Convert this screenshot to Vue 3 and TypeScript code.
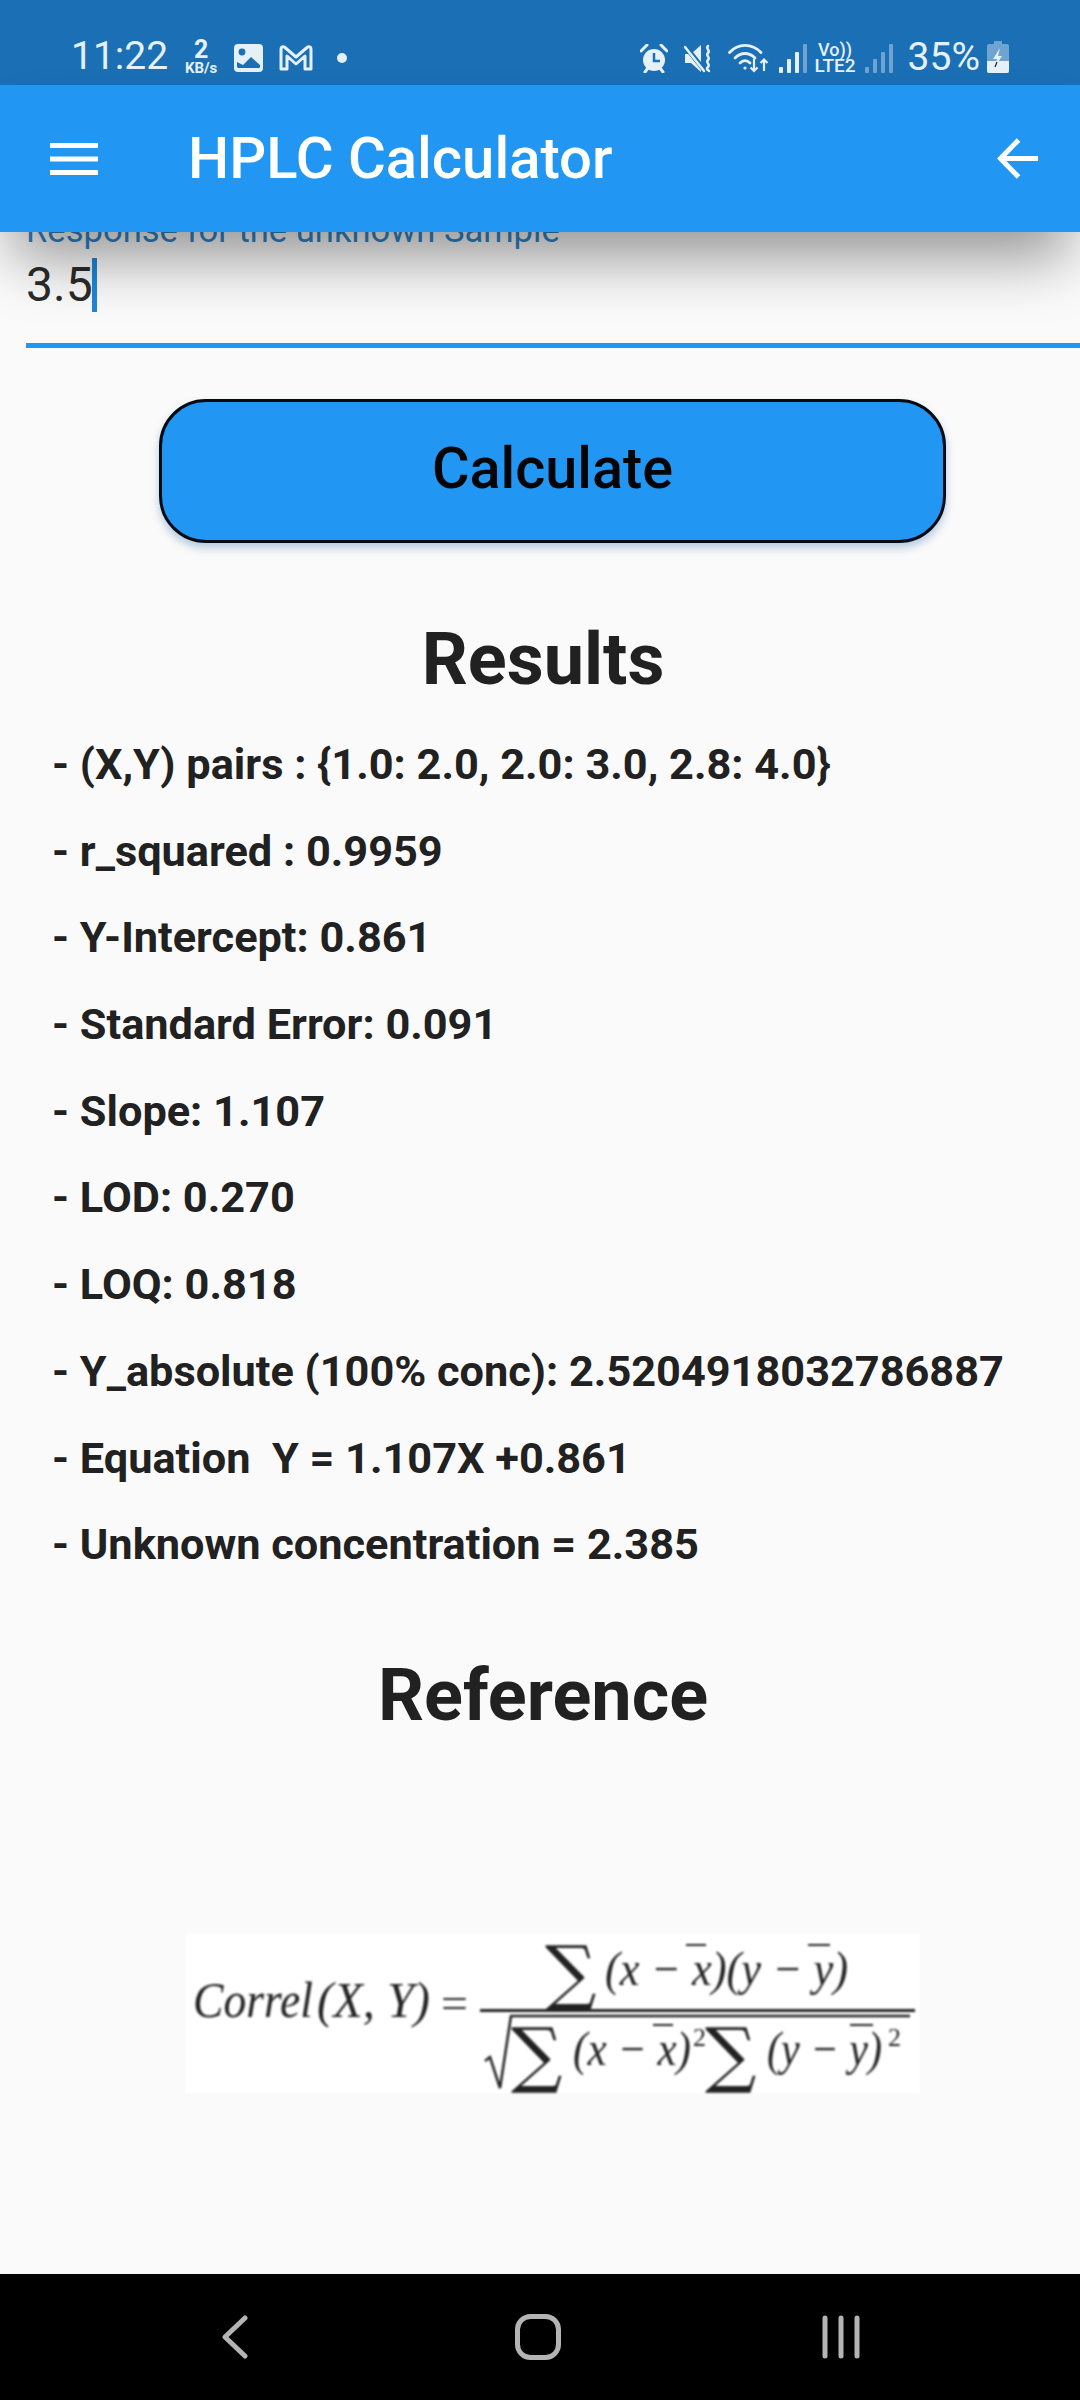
<script setup lang="ts">
const results: string[] = [
  "- (X,Y) pairs : {1.0: 2.0, 2.0: 3.0, 2.8: 4.0}",
  "- r_squared : 0.9959",
  "- Y-Intercept: 0.861",
  "- Standard Error: 0.091",
  "- Slope: 1.107",
  "- LOD: 0.270",
  "- LOQ: 0.818",
  "- Y_absolute (100% conc): 2.5204918032786887",
  "- Equation  Y = 1.107X +0.861",
  "- Unknown concentration = 2.385",
];
</script>

<template>
  <div class="phone">
    <div class="status">
      <span class="clock">11:22</span>
      <div class="speed">
        <span class="speed-num">2</span>
        <span class="speed-unit">KB/s</span>
      </div>
      <svg class="ic-gallery" width="29" height="28" viewBox="0 0 29 28">
        <rect width="29" height="28" rx="4" fill="#e6f0f9" />
        <circle cx="8" cy="8" r="3.4" fill="#1a6fb5" />
        <path d="M3 23v-5l6 3 8-8 9 8v2a1 1 0 0 1-1 1H4z" fill="#1a6fb5" />
      </svg>
      <svg class="ic-mail" width="34" height="26" viewBox="0 0 34 26" fill="none">
        <path
          d="M2 24V4c0-2 2-3 4-1.500L17 12 28 2.500C30 1 32 2 32 4v20h-6V11l-9 8-9-8v13z"
          stroke="#e6f0f9"
          stroke-width="3"
          stroke-linejoin="round"
        />
      </svg>
      <span class="dot"></span>
      <span class="grow"></span>
      <svg class="ic-alarm" width="28" height="29" viewBox="0 0 28 29">
        <circle cx="14" cy="16" r="11" fill="#e6f0f9" />
        <path d="M1 7l6-6M27 7l-6-6M5 28l3-4M23 28l-3-4" stroke="#e6f0f9" stroke-width="3" stroke-linecap="round" />
        <path d="M14 9v8h6" fill="none" stroke="#1a6fb5" stroke-width="2.500" />
      </svg>
      <svg class="ic-mute" width="30" height="29" viewBox="0 0 30 29" fill="none">
        <path d="M1 10h6l10-9v27L7 19H1z" fill="#e6f0f9" />
        <path d="M1 2l20 25" stroke="#1a6fb5" stroke-width="5" />
        <path d="M1 3l19 24" stroke="#e6f0f9" stroke-width="2.500" stroke-linecap="round" />
        <path
          d="M24 2c-3 3 3 4 0 7s3 4 0 7 3 4 0 7 1 3 1 4"
          stroke="#e6f0f9"
          stroke-width="2.500"
          stroke-linecap="round"
        />
      </svg>
      <svg class="ic-wifi" width="41" height="30" viewBox="0 0 41 30" fill="none" stroke="#e6f0f9" stroke-width="2.800">
        <path d="M1.500 9.500C10 0 24 0 33 9.500" stroke-linecap="round" />
        <path d="M7 15c6-6 14-6 20 0" stroke-linecap="round" />
        <path d="M12 20c3-3 7-3 10 0" stroke-linecap="round" />
        <circle cx="17" cy="25" r="1.600" fill="#e6f0f9" stroke="none" />
        <path d="M26 16v12M22.500 24.500l3.500 3.500 3.500-3.500" stroke-width="2.200" />
        <path d="M36 28V17M32.500 20l3.500-3.500 3.500 3.500" stroke-width="2.200" />
      </svg>
      <svg class="ic-signal" width="28" height="29" viewBox="0 0 28 29">
        <rect x="0" y="23" width="4" height="6" rx="1" fill="#e6f0f9" />
        <rect x="8" y="15" width="4" height="14" rx="1" fill="#e6f0f9" />
        <rect x="16" y="8" width="4" height="21" rx="1" fill="#e6f0f9" />
        <rect x="24" y="0" width="4" height="29" rx="1" fill="#6fa3d2" />
      </svg>
      <div class="volte">
        <span class="vo">Vo))</span>
        <span class="lte">LTE2</span>
      </div>
      <svg class="ic-signal2" width="28" height="29" viewBox="0 0 28 29" fill="#6fa3d2">
        <rect x="0" y="23" width="4" height="6" rx="1" />
        <rect x="8" y="15" width="4" height="14" rx="1" />
        <rect x="16" y="8" width="4" height="21" rx="1" />
        <rect x="24" y="0" width="4" height="29" rx="1" />
      </svg>
      <span class="percent">35%</span>
      <svg class="ic-battery" width="22" height="32" viewBox="0 0 22 32">
        <path d="M7 0h8v3h5a2 2 0 0 1 2 2v25a2 2 0 0 1-2 2H2a2 2 0 0 1-2-2V5a2 2 0 0 1 2-2h5z" fill="#6fa3d2" />
        <path d="M0 20h22v10a2 2 0 0 1-2 2H2a2 2 0 0 1-2-2z" fill="#e6f0f9" />
        <path d="M13 7l-7 11h4l-2 8 7-11h-4z" fill="#e6f0f9" />
        <path d="M10 21l-2 5" stroke="#222" stroke-width="1.200" />
      </svg>
    </div>

    <header class="appbar">
      <svg class="menu" width="48" height="32" viewBox="0 0 48 32" fill="#fff">
        <rect width="48" height="5" />
        <rect y="13.500" width="48" height="5" />
        <rect y="27" width="48" height="5" />
      </svg>
      <h1 class="title">HPLC Calculator</h1>
      <span class="grow"></span>
      <svg class="back" width="41" height="41" viewBox="0 0 41 41" fill="none" stroke="#fff" stroke-width="5">
        <path d="M41 20.500H4" />
        <path d="M21.500 2L3.500 20.500 21.500 39" />
      </svg>
    </header>

    <main class="content">
      <div class="field">
        <div class="field-label">Response for the unknown Sample</div>
        <div class="field-value">3.5<span class="caret"></span></div>
      </div>

      <button class="calc">Calculate</button>

      <h2 class="heading results-heading">Results</h2>
      <ul class="results">
        <li v-for="line in results" :key="line">{{ line }}</li>
      </ul>

      <h2 class="heading ref-heading">Reference</h2>

      <!-- correlation formula -->
      <svg class="formula" width="735" height="160" viewBox="0 0 735 160">
        <rect width="735" height="160" fill="#fff" />
        <g class="f-text" fill="#222">
          <text x="8" y="84" font-size="50" font-style="italic" textLength="120" lengthAdjust="spacingAndGlyphs">Correl</text>
          <text x="132" y="84" font-size="50" font-style="italic" textLength="113" lengthAdjust="spacingAndGlyphs">(X, Y)</text>
          <text x="256" y="84" font-size="42" textLength="27" lengthAdjust="spacingAndGlyphs">=</text>

          <text x="360" y="64" font-size="72" class="sum">∑</text>
          <text x="420" y="52" font-size="48" font-style="italic" textLength="243" lengthAdjust="spacingAndGlyphs">(x − x)(y − y)</text>

          <text x="326" y="146" font-size="72" class="sum">∑</text>
          <text x="388" y="132" font-size="48" font-style="italic" textLength="118" lengthAdjust="spacingAndGlyphs">(x − x)</text>
          <text x="508" y="113" font-size="26">2</text>
          <text x="520" y="146" font-size="72" class="sum">∑</text>
          <text x="582" y="132" font-size="48" font-style="italic" textLength="115" lengthAdjust="spacingAndGlyphs">(y − y)</text>
          <text x="703" y="113" font-size="26">2</text>
        </g>
        <g fill="none" stroke="#222">
          <path d="M295 77.500H730" stroke-width="3" />
          <path d="M300 128l5-4 10 31 11-72H725" stroke-width="2.500" />
          <path d="M501 12h20M623 12h22M468 92h20M665 92h23" stroke-width="2" />
        </g>
      </svg>
    </main>

    <nav class="navbar">
      <svg width="26" height="44" viewBox="0 0 26 44" fill="none" stroke="#b4b4b4" stroke-width="5" stroke-linecap="round" stroke-linejoin="round">
        <path d="M23 3L3 22l20 19" />
      </svg>
      <svg width="46" height="46" viewBox="0 0 46 46" fill="none">
        <rect x="2.500" y="2.500" width="41" height="41" rx="13" stroke="#b4b4b4" stroke-width="5" />
      </svg>
      <svg width="38" height="44" viewBox="0 0 38 44" fill="none" stroke="#b4b4b4" stroke-width="5" stroke-linecap="round">
        <path d="M3 3v38M19 3v38M35 3v38" />
      </svg>
    </nav>
  </div>
</template>

<style>
html,
body {
  margin: 0;
  background: #fafafa;
}
</style>

<style scoped>
.phone {
  width: 1080px;
  height: 2400px;
  display: flex;
  flex-direction: column;
  overflow: hidden;
  background: #fafafa;
  font-family: Roboto, "Liberation Sans", sans-serif;
}
.grow {
  flex: 1;
}

/* status bar */
.status {
  height: 85px;
  flex: none;
  display: flex;
  align-items: flex-end;
  padding: 0 71px 12px 71px;
  box-sizing: border-box;
  background: #1a6fb5;
  color: #e6f0f9;
}
.clock {
  font-size: 39px;
  line-height: 40px;
  margin-bottom: -3px;
}
.speed {
  margin-left: 15px;
  display: flex;
  flex-direction: column;
  align-items: center;
  font-weight: 700;
  width: 36px;
  margin-bottom: -2px;
}
.speed-num {
  font-size: 25px;
  line-height: 22px;
}
.speed-unit {
  font-size: 15px;
  line-height: 14px;
}
.ic-gallery {
  margin-left: 15px;
  margin-bottom: 1px;
}
.ic-mail {
  margin-left: 16px;
  margin-bottom: 2px;
}
.dot {
  width: 10px;
  height: 10px;
  border-radius: 50%;
  background: #e6f0f9;
  margin: 0 0 10px 24px;
}
.ic-alarm {
  margin-right: 1px;
}
.ic-mute {
  margin-left: 15px;
}
.ic-wifi {
  margin-left: 14px;
}
.ic-signal {
  margin-left: 10px;
}
.volte {
  margin-left: 8px;
  width: 41px;
  display: flex;
  flex-direction: column;
  align-items: center;
  font-weight: 500;
  margin-bottom: -1px;
}
.vo {
  font-size: 18px;
  line-height: 16px;
}
.lte {
  font-size: 19px;
  line-height: 16px;
}
.ic-signal2 {
  margin-left: 9px;
}
.percent {
  margin-left: 15px;
  font-size: 39px;
  line-height: 40px;
  margin-bottom: -4px;
}
.ic-battery {
  margin-left: 7px;
}

/* app bar */
.appbar {
  height: 147px;
  flex: none;
  display: flex;
  align-items: center;
  padding: 0 42px 0 50px;
  box-sizing: border-box;
  background: #2196f3;
  color: #fff;
  position: relative;
  z-index: 1;
  box-shadow: 0 38px 60px -12px rgba(0, 0, 0, 0.4);
}
.title {
  margin: -2px 0 0 90px;
  font-size: 58px;
  font-weight: 500;
  line-height: 60px;
}

/* scrolled page */
.content {
  flex: 1;
  min-height: 0;
  overflow: hidden;
  display: flex;
  flex-direction: column;
  padding-left: 26px;
}
.field {
  height: 115px;
  flex: none;
  margin-top: -4px;
  border-bottom: 5px solid #2196f3;
  box-sizing: content-box;
}
.field-label {
  font-size: 34.600px;
  line-height: 20px;
  color: #2f86cb;
  margin-top: -8px;
  white-space: nowrap;
}
.field-value {
  font-size: 48px;
  line-height: 54px;
  color: #2b2b2b;
  margin-top: 18px;
  display: flex;
  align-items: center;
}
.caret {
  width: 5px;
  height: 54px;
  margin-left: -1px;
  background: #2186d8;
}
.calc {
  align-self: flex-start;
  width: 787px;
  height: 144px;
  margin: 51px 0 0 133px;
  border: 3px solid #050a14;
  border-radius: 47px;
  background: #2196f3;
  color: #050505;
  font-family: inherit;
  font-size: 57.600px;
  font-weight: 500;
  padding: 0 0 6px;
  box-shadow: 0 5px 8px rgba(20, 90, 160, 0.3);
}
.heading {
  margin: 0;
  font-size: 72px;
  font-weight: 700;
  color: #212121;
  text-align: center;
  line-height: 84px;
  padding-right: 20px;
}
.results-heading {
  margin-top: 75px;
}
.results {
  list-style: none;
  margin: 38px 0 0;
  padding: 0 0 0 26px;
  display: flex;
  flex-direction: column;
  gap: 36.700px;
}
.results li {
  font-size: 43.300px;
  line-height: 50px;
  font-weight: 700;
  color: #212121;
  white-space: pre;
}
.ref-heading {
  margin-top: 84px;
}
.formula {
  align-self: flex-start;
  margin: 195px 0 0 159px;
  filter: blur(0.8px);
  flex: none;
}
.f-text {
  font-family: "Liberation Serif", serif;
}
.sum {
  font-family: "DejaVu Serif", serif;
}

/* android navigation */
.navbar {
  height: 126px;
  flex: none;
  display: grid;
  grid-template-columns: repeat(3, 303px);
  justify-items: center;
  align-items: center;
  padding: 0 61px 0 83px;
  box-sizing: border-box;
  background: #000;
}
</style>
